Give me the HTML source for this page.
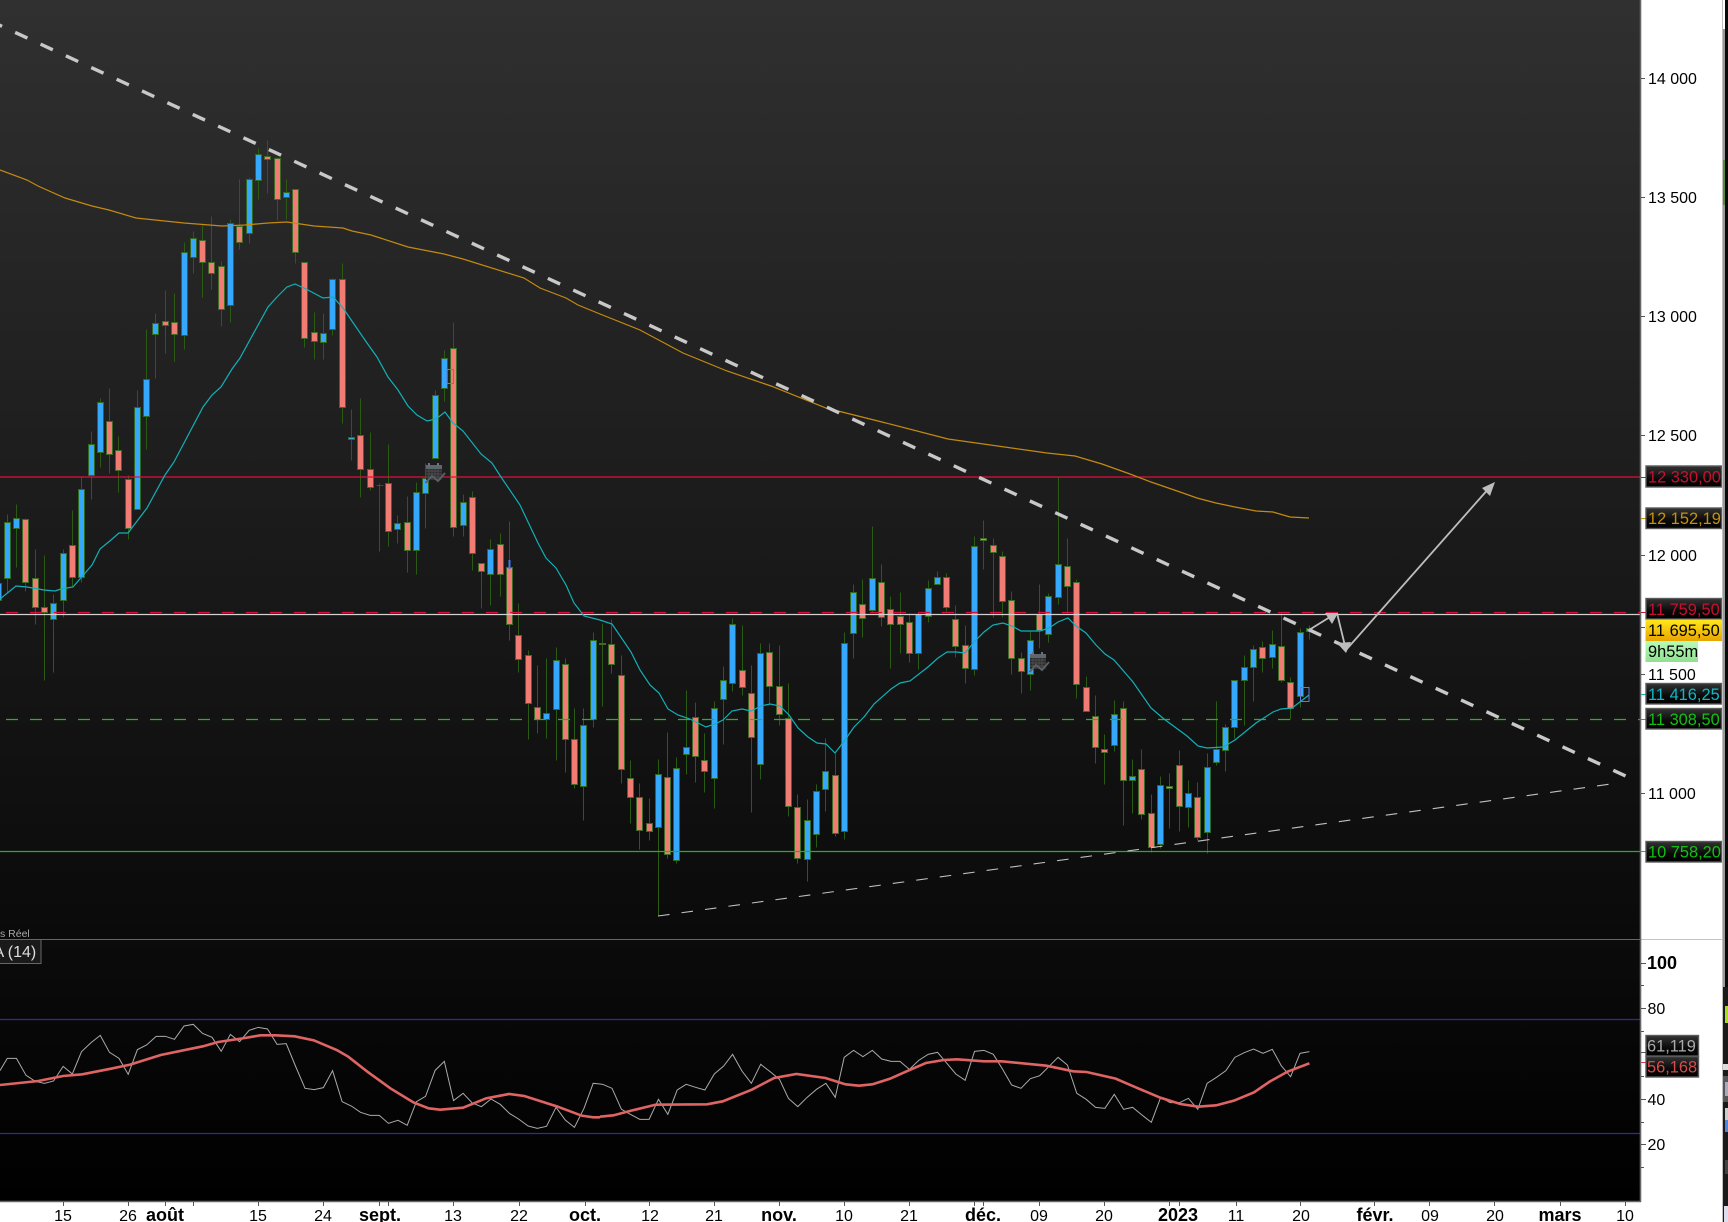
<!DOCTYPE html>
<html><head><meta charset="utf-8"><style>
html,body{margin:0;padding:0;background:#fff}
svg{display:block}
text{font-family:"Liberation Sans",Arial,sans-serif;font-size:16px}
.b{font-weight:bold;font-size:18px}
.l{font-size:16.4px}
</style></head><body>
<svg xmlns="http://www.w3.org/2000/svg" width="1728" height="1222" viewBox="0 0 1728 1222">
<defs>
<linearGradient id="g1" x1="0" y1="0" x2="0" y2="1"><stop offset="0" stop-color="#303030"/><stop offset="1" stop-color="#0a0a0a"/></linearGradient>
<linearGradient id="g2" x1="0" y1="0" x2="0" y2="1"><stop offset="0" stop-color="#0b0b0b"/><stop offset="1" stop-color="#000"/></linearGradient>
<linearGradient id="lb" x1="0" y1="0" x2="0" y2="1"><stop offset="0" stop-color="#333"/><stop offset=".6" stop-color="#0a0a0a"/><stop offset="1" stop-color="#000"/></linearGradient>
<linearGradient id="lg" x1="0" y1="0" x2="0" y2="1"><stop offset="0" stop-color="#ffe81a"/><stop offset="1" stop-color="#e8a400"/></linearGradient>
<linearGradient id="lv" x1="0" y1="0" x2="0" y2="1"><stop offset="0" stop-color="#b8fbb8"/><stop offset="1" stop-color="#8fe08f"/></linearGradient>
</defs>
<rect width="1728" height="1222" fill="#fff"/>
<rect x="0" y="0" width="1640" height="939" fill="url(#g1)"/>
<rect x="0" y="940" width="1640" height="261" fill="url(#g2)"/>

<g transform="translate(.5,.5)" fill="none">
<path stroke="#2b5a12" d="M7 514V593M16 504V567M25 518V591M35 549V624M44 555V680M53 594V672M63 549V617M72 510V587M81 477V582M91 431V499M100 398V467M109 388V473M118 436V492M128 475V539M137 390V509M146 329V449M155 313V378M165 290V353M174 293V361M184 242V349M193 231V273M202 225V297M211 216V289M221 261V326M230 219V322M239 179V249M249 177V243M258 148V199M267 140V193M277 157V220M286 179V219M295 189V263M304 262V347M314 312V359M323 313V359M332 278V335M342 263V423M351 409V460M360 398V497M370 432V490M379 483V551M376 485h7M388 444V546M397 515V543M407 496V572M416 482V574M425 463V528M435 390V458M444 350V401M453 322V536M463 494V536M472 491V570M481 563V608M490 539V605M500 533V596M509 521V640M518 603V672M528 650V739M537 665V733M546 658V738M556 647V760M565 658V772M574 708V788M583 708V820M593 632V727M602 623V706M611 619V673M621 655V783M630 760V823M639 783V849M649 798V840M658 759V916M667 732V858M676 757V863M686 690V774M695 702V782M704 733V792M714 701V808M723 666V744M732 618V691M742 625V695M751 665V812M760 643V779M769 643V704M779 645V725M788 683V816M797 794V863M807 799V881M816 784V847M825 738V811M835 753V836M844 632V839M853 584V658M862 579V637M872 526V612M881 564V626M890 596V668M900 592V653M909 613V662M918 612V669M928 580V622M937 571V584M946 573V611M955 605V657M965 625V683M974 536V675M983 520V569M993 538V617M1002 551V617M1011 591V674M1021 652V693M1030 630V690M1039 584V648M1048 593V642M1058 476V604M1067 538V613M1076 579V698M1086 676V711M1095 695V763M1104 734V784M1114 700V751M1123 701V825M1132 759V813M1141 749V819M1151 794V852M1160 776V848M1169 773V828M1179 750V831M1188 780V827M1197 782V840M1207 753V853M1216 701V765M1225 724V771M1234 680V738M1244 655V725M1253 645V701M1262 641V672M1272 630V668M1281 613V682M1290 677V719M1300 628V707M1309 625V639"/>
<path stroke="#2f6a20" fill="#36a8fb" d="M-5 583h6V600h-6zM4 522h6V578h-6zM13 518h6V528h-6zM50 603h6V619h-6zM60 553h6V600h-6zM78 489h6V577h-6zM88 444h6V475h-6zM97 402h6V452h-6zM134 407h6V509h-6zM143 379h6V416h-6zM152 323h6V334h-6zM181 252h6V335h-6zM190 238h6V257h-6zM227 223h6V305h-6zM246 179h6V233h-6zM255 154h6V180h-6zM283 192h6V197h-6zM320 333h6V342h-6zM329 279h6V329h-6zM348 437h6V439h-6zM394 523h6V529h-6zM413 492h6V550h-6zM422 478h6V493h-6zM432 395h6V458h-6zM441 358h6V388h-6zM460 502h6V525h-6zM487 549h6V574h-6zM543 713h6V719h-6zM553 660h6V709h-6zM580 725h6V786h-6zM590 640h6V719h-6zM655 774h6V827h-6zM673 768h6V860h-6zM683 747h6V754h-6zM711 708h6V778h-6zM720 680h6V699h-6zM729 624h6V683h-6zM757 653h6V764h-6zM804 820h6V859h-6zM813 791h6V834h-6zM822 771h6V789h-6zM841 643h6V831h-6zM850 592h6V633h-6zM869 578h6V610h-6zM915 614h6V653h-6zM925 588h6V616h-6zM934 577h6V584h-6zM971 546h6V669h-6zM1027 640h6V674h-6zM1045 596h6V634h-6zM1055 564h6V597h-6zM1111 714h6V745h-6zM1129 776h6V780h-6zM1157 785h6V844h-6zM1185 793h6V807h-6zM1204 767h6V832h-6zM1213 749h6V762h-6zM1222 727h6V750h-6zM1231 680h6V727h-6zM1241 667h6V680h-6zM1250 649h6V667h-6zM1269 644h6V657h-6zM1297 632h6V696h-6zM1306 628h6V631h-6z"/>
<path stroke="#3f6a26" fill="#f07c74" d="M22 519h6V582h-6zM32 578h6V607h-6zM41 607h6V612h-6zM69 545h6V577h-6zM106 421h6V454h-6zM115 450h6V470h-6zM125 479h6V528h-6zM162 321h6V325h-6zM171 322h6V334h-6zM199 240h6V262h-6zM208 262h6V273h-6zM218 266h6V309h-6zM236 226h6V242h-6zM264 156h6V159h-6zM274 158h6V199h-6zM292 189h6V252h-6zM301 262h6V338h-6zM311 332h6V341h-6zM339 279h6V407h-6zM357 435h6V469h-6zM367 469h6V487h-6zM385 483h6V531h-6zM404 522h6V550h-6zM450 348h6V527h-6zM469 497h6V553h-6zM478 563h6V571h-6zM497 544h6V574h-6zM506 567h6V624h-6zM515 635h6V659h-6zM525 655h6V703h-6zM534 707h6V719h-6zM562 664h6V739h-6zM571 739h6V784h-6zM599 643h6V644h-6zM608 644h6V664h-6zM618 675h6V769h-6zM627 778h6V797h-6zM636 797h6V830h-6zM646 823h6V831h-6zM664 777h6V854h-6zM692 717h6V756h-6zM701 760h6V771h-6zM739 670h6V687h-6zM748 693h6V737h-6zM766 652h6V686h-6zM776 686h6V714h-6zM785 718h6V806h-6zM794 807h6V858h-6zM832 775h6V833h-6zM859 604h6V618h-6zM878 582h6V617h-6zM887 609h6V624h-6zM897 616h6V624h-6zM906 622h6V653h-6zM943 577h6V607h-6zM952 619h6V646h-6zM962 645h6V668h-6zM980 538h6V540h-6zM990 545h6V552h-6zM999 556h6V601h-6zM1008 600h6V658h-6zM1018 658h6V671h-6zM1036 614h6V630h-6zM1064 566h6V586h-6zM1073 582h6V684h-6zM1083 687h6V711h-6zM1092 716h6V747h-6zM1101 749h6V752h-6zM1120 708h6V780h-6zM1138 769h6V814h-6zM1148 813h6V847h-6zM1166 786h6V788h-6zM1176 765h6V806h-6zM1194 797h6V837h-6zM1259 647h6V658h-6zM1278 646h6V680h-6zM1287 682h6V708h-6z"/>
</g>

<!-- horizontal levels -->
<path d="M0 477H1640" stroke="#e0103c" stroke-width="1.2"/>
<path d="M6 612.5H1640" stroke="#d4103c" stroke-width="1.3" stroke-dasharray="12 12"/>
<path d="M0 614.5H1640" stroke="#d0d0d0" stroke-width="1.2"/>
<path d="M6 719.5H1640" stroke="#20b820" stroke-width="1.3" stroke-dasharray="12 12"/>
<path d="M0 851.5H1640" stroke="#1db51d" stroke-width="1.2"/>

<!-- moving averages -->
<polyline fill="none" stroke="#c48a10" stroke-width="1.2" points="0,170 27,180 38,186 65,198 92,206 109,210 136,218 184,223 222,226 245,225 268,223 287,222 314,226 343,228 352,231 371,235 408,247 444,254 463,259 524,278 540,288 566,298 578,305 600,314 640,330 683,353 727,371 771,386 826,408 882,422 948,439 1047,453 1075,456 1102,464 1130,474 1151,482 1180,492 1197,498 1216,503 1235,507 1256,511 1273,512 1290,517 1309,518"/>
<polyline fill="none" stroke="#12b0b8" stroke-width="1.2" points="0,599 16,586 27,587 44,590 55,591 61,589 73,587 92,565 100,549 111,540 119,533 128,533 147,508 165,475 174,462 184,443 203,407 212,395 221,387 232,369 240,358 268,307 277,297 287,287 295,284 306,289 323,298 333,297 343,308 367,343 377,357 388,377 398,390 408,406 417,415 427,421 436,419 445,412 453,423 463,431 481,454 492,463 501,477 520,505 538,543 546,558 556,568 566,585 574,603 584,616 600,620 612,624 631,652 640,670 650,685 659,693 668,709 678,715 690,719 706,727 715,724 723,720 732,711 742,709 751,711 761,706 770,704 780,706 789,715 798,728 808,737 817,743 826,744 835,753 845,740 854,727 864,717 874,704 891,689 900,683 910,681 928,667 938,658 947,652 956,652 965,653 975,641 984,632 993,625 1003,623 1012,626 1021,631 1040,631 1049,628 1058,622 1068,618 1076,626 1086,633 1096,645 1105,654 1114,660 1133,682 1142,695 1151,708 1164,719 1187,736 1198,746 1207,748 1223,747 1235,740 1256,723 1273,712 1281,709 1292,708 1309,695"/>

<!-- blue markers -->
<rect x="447" y="369.5" width="6.5" height="14" fill="none" stroke="#5a7ce0"/>
<path d="M509.5 560V569" stroke="#4477ee" stroke-width="2"/>
<rect x="1300.5" y="687.5" width="8.5" height="14" fill="none" stroke="#5a7ce0"/>

<!-- calendar icons -->
<g transform="translate(1029,652)">
<rect x="1" y="3" width="16" height="14" fill="#2c2c2c"/>
<rect x="1" y="2" width="16" height="4" fill="#5e6670"/>
<path d="M4 0v3M13 0v3" stroke="#6a727c" stroke-width="2"/>
<path d="M1 8h16M1 11h16M1 14h16M4 6v11M7 6v11M10 6v11M13 6v11" stroke="#555" stroke-width=".7"/>
<polyline points="0.5,20 7,13 13,18 20,10" fill="none" stroke="#5a5f66" stroke-width="2"/>
</g>
<g transform="translate(425,463)">
<rect x="1" y="3" width="16" height="14" fill="#2c2c2c"/>
<rect x="1" y="2" width="16" height="4" fill="#5e6670"/>
<path d="M4 0v3M13 0v3" stroke="#6a727c" stroke-width="2"/>
<path d="M1 8h16M1 11h16M1 14h16M4 6v11M7 6v11M10 6v11M13 6v11" stroke="#555" stroke-width=".7"/>
<polyline points="0.5,20 7,13 13,18 20,10" fill="none" stroke="#5a5f66" stroke-width="2"/>
</g>

<!-- trend lines -->
<path d="M-10.2 20.7L1630 778" stroke="#c8c8c8" stroke-width="3.4" stroke-dasharray="13.5 14.44" fill="none"/>
<path d="M658 916L1618 783" stroke="#c0c0c0" stroke-width="1.1" stroke-dasharray="11.6 12.1" fill="none"/>

<!-- arrows -->
<path d="M1309 630L1330 617M1337 613L1346 650M1346 650L1490 487" stroke="#bdbdbd" stroke-width="1.8" fill="none"/>
<polygon points="1338,613 1325,613 1332,624" fill="#bdbdbd"/>
<polygon points="1346,653 1337,643 1351,642" fill="#bdbdbd"/>
<polygon points="1495,482 1482,488 1490,496" fill="#bdbdbd"/>

<!-- indicator panel -->
<path d="M0 1019.5H1640M0 1133.5H1640" stroke="#2a2ab0" stroke-width="1.2"/>
<g transform="translate(0,920) scale(.38270,.33333)" fill="none">
<polyline vector-effect="non-scaling-stroke" stroke="#aaa" stroke-width="1" points="0,452 19,415 43,415 68,466 92,484 116,490 140,483 165,439 189,462 213,395 238,368 262,346 286,397 311,415 335,463 359,389 383,375 408,349 432,349 456,358 481,318 505,313 529,340 554,352 578,394 602,343 626,365 651,331 675,322 699,327 724,373 748,371 772,438 797,505 821,509 845,503 869,452 894,545 918,558 942,577 967,586 991,586 1015,610 1040,601 1064,616 1088,545 1112,529 1137,451 1161,424 1185,542 1210,520 1234,549 1258,560 1283,537 1307,553 1331,580 1355,597 1380,618 1404,625 1428,619 1453,562 1477,600 1501,622 1526,565 1550,490 1568,492"/>
<polyline vector-effect="non-scaling-stroke" stroke="#e06464" stroke-width="2.6" points="0,495 100,483 165,468 215,463 290,446 340,434 420,405 530,379 570,366 640,354 680,346 720,346 770,349 820,361 880,390 910,410 960,455 1020,505 1080,547 1120,565 1150,569 1210,563 1270,535 1330,522 1370,528 1455,559 1520,587 1550,592 1568,592"/>
</g>
<g transform="translate(600,1000) scale(.44643,.33333)" fill="none">
<polyline vector-effect="non-scaling-stroke" stroke="#aaa" stroke-width="1" points="0,252 6,253 27,265 48,328 68,343 89,358 110,358 131,298 152,343 173,270 193,253 214,262 235,270 256,222 277,198 297,163 318,213 339,250 360,193 381,215 402,238 422,295 443,320 464,292 485,268 506,250 527,292 547,172 568,151 589,170 610,151 631,177 652,184 672,184 693,208 714,181 735,163 756,157 777,190 797,222 818,241 839,154 860,151 881,163 902,208 922,255 943,265 964,236 985,227 1006,199 1026,172 1047,195 1068,280 1089,298 1110,322 1131,325 1152,283 1173,328 1193,322 1214,345 1235,367 1256,292 1277,308 1298,308 1318,295 1339,328 1360,250 1381,232 1402,212 1422,172 1443,158 1464,147 1485,160 1506,148 1526,197 1547,230 1568,160 1589,155"/>
<polyline vector-effect="non-scaling-stroke" stroke="#e06464" stroke-width="2.6" points="0,350 30,346 70,332 125,314 240,313 275,304 340,269 390,234 440,222 505,234 550,253 580,257 610,253 650,236 690,212 730,189 770,180 800,178 860,184 900,184 1000,197 1060,214 1090,216 1155,236 1200,262 1255,293 1300,312 1340,320 1380,316 1420,302 1465,277 1500,245 1540,215 1589,190"/>
</g>

<text x="0" y="937" fill="#aaa" style="font-size:10.5px">s Réel</text>
<rect x="-2" y="939.5" width="43" height="24" fill="#1a1a1a" stroke="#666"/>
<text x="-6.5" y="957" fill="#ddd">A (14)</text>

<!-- frame lines -->
<path d="M0 939.5H1640" stroke="#666"/>
<path d="M1640 939.5H1722" stroke="#c4c4c4"/>
<path d="M1640.5 0V1202" stroke="#666" stroke-width="1.6"/>
<path d="M0 1201.5H1641" stroke="#666" stroke-width="1.4"/>

<!-- price axis ticks -->
<path stroke="#555" d="M1641 78.5h4M1641 197.5h4M1641 316.5h4M1641 435.5h4M1641 555.5h4M1641 627.5h4M1641 674.5h4M1641 793.5h4M1641 963.5h5M1641 985.5h3M1641 1008.5h5M1641 1031.5h3M1641 1052.5h5M1641 1076.5h3M1641 1099.5h5M1641 1122.5h3M1641 1144.5h5M1641 1167.5h3"/>
<path d="M1641 477.5h5M1641 612.5h5" stroke="#d0103c"/>
<path d="M1641 518.5h5" stroke="#c8900a"/>
<path d="M1641 694.5h5" stroke="#12b0b8"/>
<path d="M1641 719.5h5M1641 851.5h5" stroke="#20b820"/>
<path d="M1641 1062.5h5" stroke="#d04040"/>

<!-- price labels -->
<g fill="#000">
<text x="1648" y="84">14 000</text>
<text x="1648" y="203">13 500</text>
<text x="1648" y="322">13 000</text>
<text x="1648" y="441">12 500</text>
<text x="1648" y="561">12 000</text>
<text x="1648" y="680">11 500</text>
<text x="1648" y="799">11 000</text>
<text x="1647" y="969" class="b">100</text>
<text x="1647.5" y="1014">80</text>
<text x="1647.5" y="1105">40</text>
<text x="1647.5" y="1150">20</text>
</g>
<g stroke="#5a5a5a" stroke-width="1.4">
<rect x="1646" y="466" width="75.5" height="21" fill="url(#lb)"/>
<rect x="1646" y="508" width="75.5" height="20.5" fill="url(#lb)"/>
<rect x="1646" y="598.5" width="75.5" height="20.5" fill="url(#lb)"/>
<rect x="1646" y="683.5" width="75.5" height="20.5" fill="url(#lb)"/>
<rect x="1646" y="708.5" width="75.5" height="20.5" fill="url(#lb)"/>
<rect x="1646" y="841.5" width="75.5" height="20.5" fill="url(#lb)"/>
<rect x="1646" y="1035.5" width="52.5" height="20.5" fill="url(#lb)"/>
<rect x="1646" y="1056.5" width="52.5" height="20.5" fill="url(#lb)"/>
</g>
<rect x="1645.5" y="619.5" width="76.5" height="21.5" fill="url(#lg)"/>
<rect x="1645.5" y="641" width="52.5" height="21" fill="url(#lv)"/>
<text class="l" x="1648" y="482.5" fill="#c8102e">12 330,00</text>
<text class="l" x="1648" y="524" fill="#c8900a">12 152,19</text>
<text class="l" x="1648" y="615" fill="#c8102e">11 759,50</text>
<text class="l" x="1648" y="636" fill="#000">11 695,50</text>
<text class="l" x="1648" y="657" fill="#000">9h55m</text>
<text class="l" x="1648" y="700" fill="#10b8c8">11 416,25</text>
<text class="l" x="1648" y="725" fill="#12c012">11 308,50</text>
<text class="l" x="1648" y="857.5" fill="#12c012">10 758,20</text>
<text class="l" x="1647" y="1051.5" fill="#aaa">61,119</text>
<text class="l" x="1647" y="1072.5" fill="#d84a4a">56,168</text>

<!-- date ticks -->
<path stroke="#555" d="M63.5 1202v4M128.5 1202v4M165.5 1202v4M193.5 1202v4M258.5 1202v4M323.5 1202v4M379.5 1202v4M388.5 1202v4M453.5 1202v4M519.5 1202v4M585.5 1202v4M649.5 1202v4M714.5 1202v4M779.5 1202v4M844.5 1202v4M909.5 1202v4M974.5 1202v4M983.5 1202v4M1039.5 1202v4M1104.5 1202v4M1169.5 1202v4M1179.5 1202v4M1236.5 1202v4M1300.5 1202v4M1374.5 1202v4M1429.5 1202v4M1494.5 1202v4M1560.5 1202v4M1625.5 1202v4"/>
<g fill="#000" text-anchor="middle">
<text x="63" y="1221">15</text>
<text x="128" y="1221">26</text>
<text x="165" y="1221" class="b">août</text>
<text x="258" y="1221">15</text>
<text x="323" y="1221">24</text>
<text x="380" y="1221" class="b">sept.</text>
<text x="453" y="1221">13</text>
<text x="519" y="1221">22</text>
<text x="585" y="1221" class="b">oct.</text>
<text x="650" y="1221">12</text>
<text x="714" y="1221">21</text>
<text x="779" y="1221" class="b">nov.</text>
<text x="844" y="1221">10</text>
<text x="909" y="1221">21</text>
<text x="983" y="1221" class="b">déc.</text>
<text x="1039" y="1221">09</text>
<text x="1104" y="1221">20</text>
<text x="1178" y="1221" class="b">2023</text>
<text x="1236" y="1221">11</text>
<text x="1301" y="1221">20</text>
<text x="1375" y="1221" class="b">févr.</text>
<text x="1430" y="1221">09</text>
<text x="1495" y="1221">20</text>
<text x="1560" y="1221" class="b">mars</text>
<text x="1625" y="1221">10</text>
</g>

<!-- right edge strip -->
<rect x="1722" y="0" width="1" height="1222" fill="#c0c0c0"/>
<rect x="1723" y="0" width="2" height="987" fill="#9a9a9a"/>
<rect x="1723" y="0" width="2" height="29" fill="#fff"/>
<rect x="1723" y="160" width="2" height="45" fill="#5a8a3a"/>
<rect x="1725" y="0" width="3" height="987" fill="#0a0a0a"/>
<rect x="1723" y="987" width="5" height="235" fill="#1a1a1a"/>
<rect x="1725" y="1006" width="3" height="17" fill="#a8e020"/>
<rect x="1723" y="1064" width="5" height="6" fill="#ddd"/>
<rect x="1723" y="1076" width="5" height="26" fill="#555"/>
<rect x="1725" y="1082" width="3" height="14" fill="#aab"/>
<rect x="1725" y="1120" width="3" height="12" fill="#4f86e0"/>
<rect x="1725" y="1108" width="3" height="12" fill="#ccc"/>
<rect x="1725" y="1160" width="3" height="14" fill="#444"/>
<rect x="1724" y="1206" width="4" height="16" fill="#dde"/>
</svg>
</body></html>
